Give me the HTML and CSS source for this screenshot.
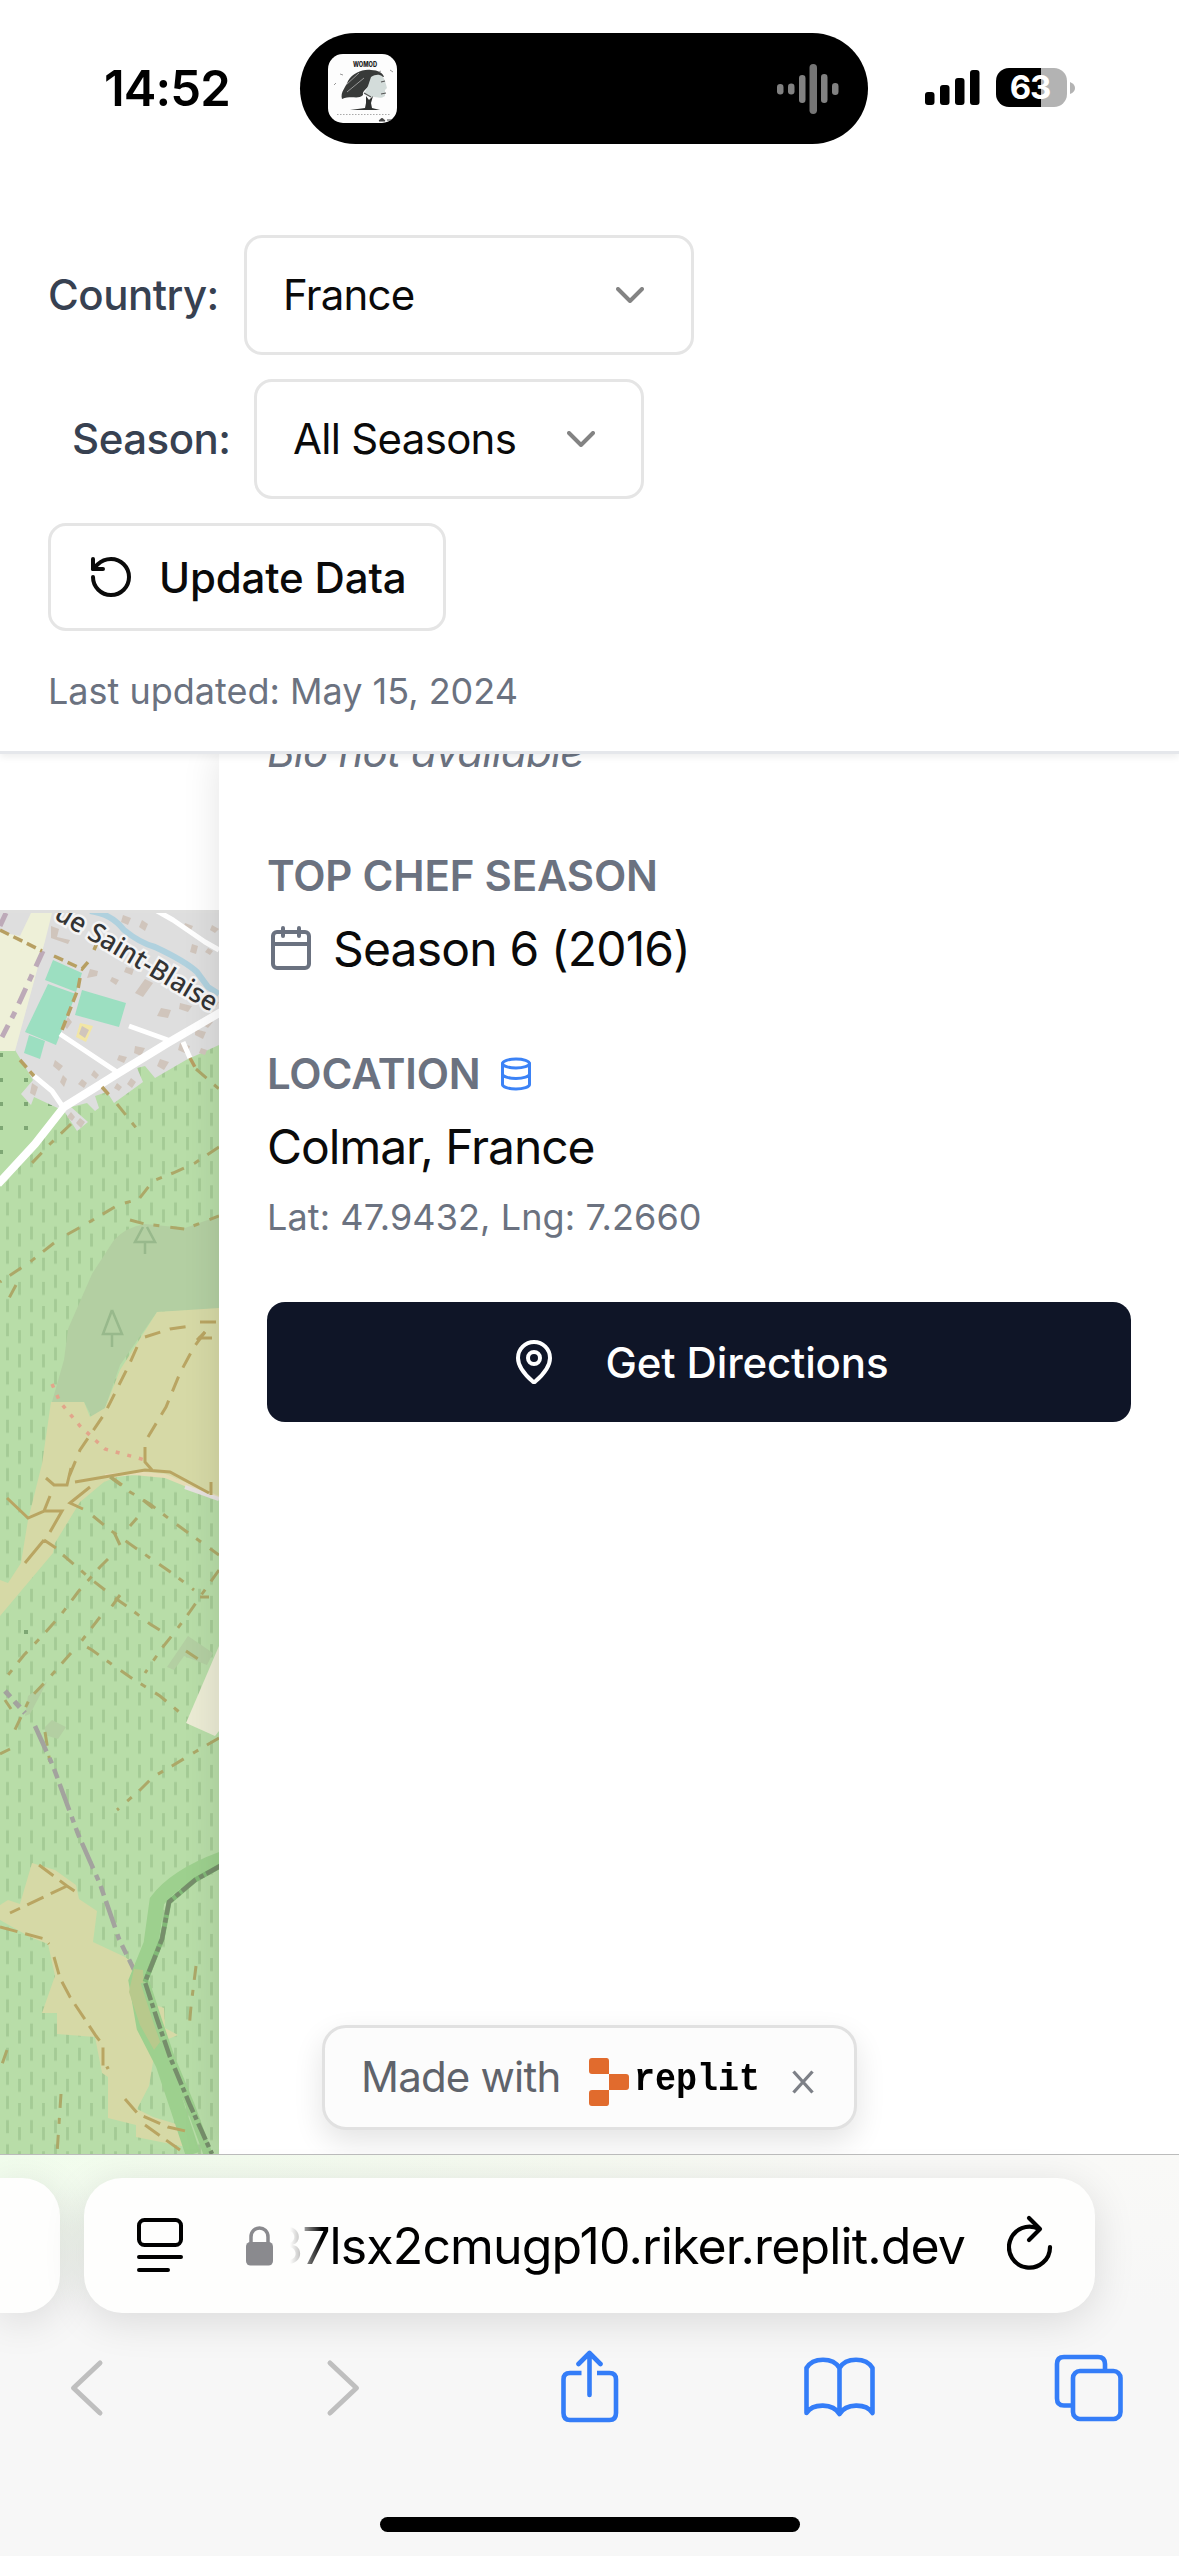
FILE: index.html
```html
<!DOCTYPE html>
<html lang="en">
<head>
<meta charset="utf-8">
<title>Top Chef Map</title>
<link rel="stylesheet" href="styles.css">
</head>
<body>
<div class="screen">
  <div class="status">
    <div class="time">14:52</div>
    <div class="island">
      <svg class="cover" viewBox="0 0 69 69">
        <rect width="69" height="69" rx="15" fill="#fdfdfd"/>
        <text x="25" y="12.5" font-size="7" font-weight="800" textLength="24" lengthAdjust="spacingAndGlyphs" fill="#222">WOMOD</text>
        <path d="M14 45C12 38 18 33 20 27C25 19 34 15 43 16C50 16 55 19 56 23C50 21 44 24 42 30C40 35 34 36 35 41C30 46 24 41 14 45Z" fill="#383a39"/>
        <path d="M43 23C49 19 55 20 57 27L59 34L57 36L57 42C52 46 47 42 43 43L36 40L40 32Z" fill="#d3dcda"/>
        <path d="M53 28L57 27M53 40L58 39M36 39L43 43" stroke="#555" stroke-width="1.2"/>
        <path d="M38 42L41 46L45 42L43 49L44 54L52 56L22 56L37 54L38 49Z" fill="#2e302f"/>
        <path d="M6 31L8 29M12 20L15 21M51 18L53 17M62 16L65 18M18 31L31 19M19 38L36 24" stroke="#999" stroke-width="1"/>
        <path d="M9 60.500H62" stroke="#aaa" stroke-width="1.200" stroke-dasharray="1.500 1.500"/>
        <path d="M51 67Q54 62 57 67ZM59 66H63" stroke="#444" fill="#444"/>
      </svg>
      <svg class="wave" viewBox="0 0 62 52" fill="#818181">
        <rect x="0" y="21" width="6.500" height="10.500" rx="3.200"/><rect x="11" y="20.500" width="6.500" height="11" rx="3.200"/><rect x="22" y="12" width="6.500" height="28" rx="3.200"/><rect x="32.500" y="1" width="7.500" height="50" rx="3.700" fill="#757575"/><rect x="44" y="11" width="6.500" height="29" rx="3.200"/><rect x="55" y="20" width="6.500" height="12" rx="3.200"/>
      </svg>
    </div>
    <div class="indicators">
      <svg class="signal" viewBox="0 0 55 35"><rect y="22" width="9.500" height="13" rx="3"/><rect x="15" y="15" width="9.500" height="20" rx="3"/><rect x="30" y="8" width="9.500" height="27" rx="3"/><rect x="45" width="9.500" height="35" rx="3"/></svg>
      <div class="battery">63</div>
      <svg class="nub" viewBox="0 0 5 12"><path d="M0 0Q5 2 5 6T0 12Z" fill="#b3b3b3"/></svg>
    </div>
  </div>

  <header class="header">
    <div class="field">
      <label class="label country">Country:</label>
      <div class="select wide"><span class="t-france">France</span><svg class="ico chev" viewBox="0 0 24 24"><path d="m6 9 6 6 6-6"/></svg></div>
    </div>
    <div class="field indent">
      <label class="label season">Season:</label>
      <div class="select"><span class="t-seasons">All Seasons</span><svg class="ico chev" viewBox="0 0 24 24"><path d="m6 9 6 6 6-6"/></svg></div>
    </div>
    <button class="update"><svg class="ico" viewBox="0 0 24 24"><path d="M3 12a9 9 0 1 0 9-9 9.750 9.750 0 0 0-6.740 2.740L3 8"/><path d="M3 3v5h5"/></svg><span>Update Data</span></button>
    <div class="updated">Last updated: May 15, 2024</div>
  </header>

  <main class="main">
    <div class="mapcol">
      <svg class="map" viewBox="0 910 219 1244">
        <defs>
          <pattern id="trees" x="0" y="0" width="24" height="24.150" patternUnits="userSpaceOnUse">
            <path d="M7.500 19V24.150M7.500 0V8M19.500 2V15" stroke="#a4ca95" stroke-width="2.800"/>
          </pattern>
        </defs>
        <rect y="910" width="219" height="1244" fill="#b8dda8"/>
        <path d="M0 1190L90 1080L219 1040V2154H0Z" fill="url(#trees)"/>
        <g fill="#7ea774"><path d="M0 1053h3v4H0zM24 1078h4v4h-4zM0 1078h3v4H0zM48 1102h4v4h-4zM24 1102h4v4h-4zM0 1102h3v4H0zM24 1126h4v4h-4zM0 1126h3v4H0zM0 1150h3v4H0zM24 1630h4v4h-4z"/></g>
        <!-- village -->
        <path d="M0 910H219V1045L186 1060L155 1078L145 1066L137 1068L143 1082L114 1103L107 1092L95 1096L99 1108L95 1111L87 1103L71 1107L88 1122L77 1131L64 1111L34 1097L31 1105L21 1094L33 1080L15 1050H0Z" fill="#dedede"/>
        <path d="M0 932L20 936L31 913H52L45 941L15 1051H0Z" fill="#eef0d8"/>
        <g fill="#9cdfc1"><path d="M53 960L82 973L76 992L45 980Z"/><path d="M48 984L76 994L56 1045L25 1032Z"/><path d="M82 990L126 1003L119 1027L75 1015Z"/><path d="M29 1035L45 1041L40 1059L24 1053Z"/></g>
        <path d="M80 1023L93 1026L86 1042L76 1037Z" fill="#f2e6a5"/>
        <g fill="#d0c5bc"><path d="M51 926l8 3-2 8 13 3-2 4-17-6zM123 915l8 3-3 7-7-3zM142 920l6 4-3 7-6-4zM185 923l8 3-3 6-7-3zM192 944l6 2-2 8-6-2zM90 969l8 2-1 5-10 2zM112 977l7 3-3 5-6-4zM145 979l8 4-10 14-8-4zM161 1008l10 2-3 8-11-2zM126 967l8 2-2 6-8-3zM213 1000l6 2-3 5-6-2zM180 1003l12 3-4 6-9-3zM206 1018l7 4-5 6-7-4zM195 1029l11 3-3 7-8-4zM160 1059l9 3-5 8-7-4zM135 1046l10 2-4 8-7-3zM180 1043l10 3-3 8-9-4zM55 1060l8 6-4 5-6-5zM63 1075l4 4-3 8-4-5zM82 1079l5 4-3 5-6-4zM94 1070l5 5-3 4-5-4zM32 1083l6 4-3 9-5-3zM71 1112l4 5-3 4-5-4zM80 1118l5 4-4 6-5-5zM119 1055l8 2-3 6-7-3zM68 1017l4 5-5 7-4-4zM131 1078l5 4-4 6-5-4zM82 1026l7 4-4 8-6-4zM208 948l5 3-3 4-5-3zM117 1083l5 4-3 4-5-3zM201 1048l6 2-2 5-6-2zM212 925l7 4-4 4-5-3z"/></g>
        <path d="M90 911Q112 914 124 930Q140 943 155 947Q185 961 197 972L208 987L219 994" fill="none" stroke="#b0d1de" stroke-width="6"/>
        <g fill="none" stroke="#fff" stroke-linejoin="round">
          <path d="M152 908L173 920L205 942L219 950M60 1034L117 1072M34 1076L52 1091L63 1107M129 1026L168 1040M183 1042L190 1058" stroke-width="5"/>
          <path d="M221 1012L166 1044L117 1074L64 1107L35 1144L-2 1184" stroke-width="8"/>
        </g>
        <g fill="none" stroke="#bdaab8" stroke-width="5" stroke-dasharray="17 9 7 8"><path d="M43 951L31 977L14 1014L2 1037"/><path d="M0 926L6 913"/></g>
        <path d="M0 930L24 942L42 951M54 956L82 969L88 962M80 978L78 989L62 1030M94 950L97 943M20 1060L34 1076M190 1058L196 1069M102 1087L109 1095" fill="none" stroke="#b79f62" stroke-width="3.500" stroke-dasharray="10 5"/>
        <text class="street" x="53" y="918" transform="rotate(30.800 53 918)" textLength="184" lengthAdjust="spacingAndGlyphs">ue Saint-Blaise</text>
        <!-- woods, meadow and clearings -->
        <path d="M219 1216L185 1228L145 1224Q126 1227 114 1240L92 1274L68 1329L64 1360L54 1395L52 1402H84L92 1417L105 1408L120 1365L157 1312L219 1309Z" fill="#b3cfa2"/>
        <g fill="none" stroke="#98b98c" stroke-width="2.500"><path d="M143 1227L135 1242H155L147 1227M145 1242V1254M112 1310L103 1334H122L112 1310M112 1334V1347"/></g>
        <path d="M51 1402H84L90 1417L105 1408L120 1370L157 1312L219 1308V1496L175 1478L130 1472L104 1482L80 1502L55 1543L53 1553L0 1616V1580L8 1583L21 1563L28 1520L42 1464Z" fill="#d6d9a6"/>
        <path d="M167 1667L188 1636L213 1653L207 1665L184 1656L174 1670Z" fill="#b3cfa2"/><path d="M25 1716L28 1696L47 1682L30 1714ZM45 1727L52 1720L66 1727L58 1739L45 1735Z" fill="#b3cfa2"/>
        <path d="M219 1646L186 1723L215 1736L219 1731Z" fill="#ebebd4"/>
        <path d="M52 1384L60 1402L80 1426L105 1449L145 1460" fill="none" stroke="#e2a58b" stroke-width="3.500" stroke-dasharray="4 8"/>
        <path d="M105 1476L134 1473L165 1476L219 1498" fill="none" stroke="#e5dcb5" stroke-width="4"/><path d="M185 1487L219 1499" fill="none" stroke="#e6e1df" stroke-width="4"/>
        <g fill="none" stroke="#b9a562" stroke-width="3">
          <path d="M145 1337L170 1329L190 1326M200 1322H219M137 1347L129 1365L105 1413L80 1450L66 1484M205 1332L194 1347L180 1373L166 1407L148 1437" stroke-dasharray="16 10"/>
          <path d="M75 1482L110 1476L145 1470L170 1472L209 1493M197 1340L205 1332M198 1338H212M145 1447V1462L152 1470M211 1482V1495M46 1478L54 1485H67L71 1468M7 1498L28 1518L44 1511L50 1496M44 1511H62L50 1532M44 1540L25 1563M44 1540L56 1548M90 1487L70 1503L83 1509M111 1477L122 1485"/>
        </g>
        <g fill="none" stroke="#aca868" stroke-width="3" stroke-dasharray="14 10 6 11">
          <path d="M219 1147L195 1163L173 1173L153 1181L139 1199L118 1205L86 1224L61 1238M130 1220L145 1224L185 1229L219 1216M71 1124L50 1144L31 1164M117 1104L141 1134M196 1069L219 1089M54 1243L30 1262L0 1282M16 1285L8 1300"/>
          <path d="M110 1477L130 1492L150 1504L172 1521L194 1537L219 1555M93 1516L110 1530L150 1558L172 1573L194 1590M63 1555L92 1580L105 1590M115 1598L128 1607L150 1624L163 1632"/>
          <path d="M219 1570L202 1594L189 1613L174 1633L162 1648L145 1673M120 1595L107 1613M108 1559L100 1567L78 1592L60 1616L43 1635L24 1655L8 1675M137 1518L130 1526"/>
          <path d="M100 1617L80 1643L92 1650L110 1663L130 1677L160 1696L184 1716M71 1653L50 1677L30 1698L12 1736M186 1651L198 1659M143 1500L153 1508M120 1545L112 1528M200 1597L209 1597"/>
          <path d="M219 1738L195 1752L172 1766L153 1777L140 1790L117 1810M0 1754L10 1749M5 1700L11 1709M45 1732L50 1763M196 1966L191 2006L189 2030M61 2094L57 2154M7 2050L0 2070"/>
        </g>
        <path d="M0 1920V1905L8 1900L20 1904L32 1863L55 1870L76 1885L79 1899L97 1911L93 1942L125 1957L143 1970L142 2000L164 2008L165 2028L178 2035L166 2040L153 2062L149 2086L137 2109L153 2117L186 2127V2147L136 2137V2125L108 2118V2077L102 2073L95 2037L57 2034V2013H42L55 1976L48 1944L30 1937Z" fill="#d6d9a6"/>
        <path d="M35 1726L53 1766L78 1834L100 1884L119 1939L140 1982" fill="none" stroke="#a3a39e" stroke-width="4.500" stroke-dasharray="28 7 6 6 10 6"/>
        <path d="M5 1691L25 1713" stroke="#a3a39e" stroke-width="5" stroke-dasharray="8 6"/>
        <path d="M222 1859Q176 1876 157 1901L151 1944L136 1981L144 2027L163 2064L193 2154" fill="none" stroke="#9dd08e" stroke-width="15"/>
        <path d="M134 1969L129 1992L140 2025L154 2050L163 2038L144 1990L143 1970Z" fill="#b8c98c"/>
        <path d="M145 1982L157 2019L170 2057L190 2105L208 2154" fill="none" stroke="#9dd08e" stroke-width="9"/>
        <path d="M222 1865L195 1880L169 1902L162 1939L145 1982" fill="none" stroke="#80b976" stroke-width="5"/>
        <path d="M222 1865L195 1880L169 1902L162 1939L145 1982L157 2019L170 2057L190 2105L212 2154" fill="none" stroke="#768e6b" stroke-width="4.500" stroke-dasharray="18 3 5 4"/>
        <path d="M39 1865L67 1886L76 1892M67 1886L10 1913M0 1927L45 1939L49 1944M54 1957L60 1978L70 1997L96 2036L103 2045V2070L109 2067M125 2099L138 2114L168 2127L190 2132M145 2125L180 2150" fill="none" stroke="#b9a562" stroke-width="3" stroke-dasharray="18 8"/>
        <rect y="910" width="219" height="3" fill="#dfdfde"/>
      </svg>
    </div>
    <section class="panel">
      <p class="bio"><span>Bio not available</span></p>
      <h3 class="heading h-season">TOP CHEF SEASON</h3>
      <p class="value"><svg class="ico cal" viewBox="0 0 24 24"><path d="M8 2v4M16 2v4M3 10h18"/><rect x="3" y="4" width="18" height="18" rx="2"/></svg><span class="v-season">Season 6 (2016)</span></p>
      <h3 class="heading h-location">LOCATION<svg class="ico db" viewBox="0 0 24 24"><ellipse cx="12" cy="5" rx="9" ry="3"/><path d="M3 5v14a9 3 0 0 0 18 0V5M3 12a9 3 0 0 0 18 0"/></svg></h3>
      <p class="value"><span class="v-city">Colmar, France</span></p>
      <p class="coords">Lat: 47.9432, Lng: 7.2660</p>
      <button class="directions"><svg class="ico" viewBox="0 0 24 24"><path d="M20 10c0 4.993-5.539 10.193-7.399 11.799a1 1 0 0 1-1.202 0C9.539 20.193 4 14.993 4 10a8 8 0 0 1 16 0"/><circle cx="12" cy="10" r="3"/></svg><span>Get Directions</span></button>
    </section>
    <div class="badge">
      <span class="made">Made with</span>
      <svg class="replit-mark" viewBox="0 0 40 48" fill="#e16b2d"><path d="M3 0H17.500Q20 0 20 3V16H3Q0 16 0 13V3Q0 0 3 0ZM20 16H37Q40 16 40 19V29Q40 32 37 32H20ZM3 32H20V45Q20 48 17.500 48H3Q0 48 0 45V35Q0 32 3 32Z"/></svg>
      <span class="replit">replit</span>
      <svg class="close" viewBox="0 0 22 24"><path d="M1.500 1.500L20.500 22.500M20.500 1.500L1.500 22.500" stroke="#7d8087" stroke-width="3.300"/></svg>
    </div>
  </main>

  <footer class="browser">
    <div class="tabs">
      <div class="tab-prev"></div>
      <div class="address">
        <svg class="reader" viewBox="0 0 46 54" fill="none" stroke="#000" stroke-width="4" stroke-linecap="round"><rect x="2" y="2" width="42" height="25" rx="5.500"/><path d="M2 39H44M2 52H31"/></svg>
        <svg class="lock" viewBox="0 0 27 40"><rect y="16" width="27" height="23.500" rx="4.500" fill="#8a8a8e"/><path d="M5 18V11C5 -1 22 -1 22 11V18" fill="none" stroke="#8a8a8e" stroke-width="3.500"/></svg>
        <div class="url"><span>37lsx2cmugp10.riker.replit.dev</span></div>
        <svg class="reload" viewBox="0 0 46 56" fill="none" stroke="#000" stroke-width="4.200" stroke-linecap="round" stroke-linejoin="round"><path d="M43 32A20.500 20.500 0 1 1 32 14"/><path d="M22 3L33 14L22 25"/></svg>
      </div>
    </div>
    <nav class="tools">
      <svg viewBox="0 0 72 76" stroke="#bfbfbf"><path d="M49 13L22.500 38L49 63"/></svg>
      <svg viewBox="0 0 72 76" stroke="#bfbfbf"><path d="M28 13L54.500 38L28 63"/></svg>
      <svg viewBox="0 0 72 76"><path class="butt" d="M29.500 23H18Q11.500 23 11.500 29.500V63Q11.500 70 18 70H57.500Q64 70 64 63V29.500Q64 23 57.500 23H45"/><path d="M37.500 45V3.500M26.500 14L37.500 3L48.500 14"/></svg>
      <svg viewBox="0 0 72 76"><path d="M36.500 18C30 7 10 7 3.500 18V63C10 53 30 53 36.500 64C43 53 63 53 69.500 63V18C63 7 43 7 36.500 18V63"/></svg>
      <svg viewBox="0 0 72 76"><path class="butt" d="M18 55.500H11Q4 55.500 4 48.500V14Q4 7 11 7H45Q52 7 52 14V20"/><rect x="20" y="21" width="47.500" height="48" rx="7"/></svg>
    </nav>
    <div class="home"></div>
  </footer>
</div>
</body>
</html>
```
FILE: styles.css
```css
* { box-sizing: border-box; margin: 0; padding: 0; }
body { background: #fff; font-family: Inter, "Liberation Sans", sans-serif; color: #0a0a0a; }
svg { display: block; flex: none; }
button { font: inherit; color: inherit; background: none; border: 0; }
.screen { width: 1179px; height: 2556px; overflow: hidden; display: flex; flex-direction: column; background: #fff; }

.status { display: grid; grid-template-columns: 300px 568px 311px; height: 187px; padding-top: 33px; flex: none; }
.time { padding-left: 104px; height: 111px; line-height: 111px; font-size: 49px; font-weight: 600; color: #000; letter-spacing: -0.9px; }
.island { height: 111px; border-radius: 56px; background: #000; display: flex; align-items: center; justify-content: space-between; padding: 0 29px 0 28px; }
.cover { width: 69px; height: 69px; }
.wave { width: 62px; height: 52px; }
.indicators { display: flex; align-items: center; height: 109px; padding-left: 57px; }
.signal { width: 55px; height: 35px; }
.battery { width: 71px; height: 39px; margin-left: 16px; border-radius: 13px; background: linear-gradient(90deg, #000 45px, #b3b3b3 45px); color: #fff; font-size: 33px; font-weight: 700; line-height: 39px; text-align: center; letter-spacing: -1px; padding-right: 3px; }
.nub { width: 5px; height: 12px; margin-left: 3px; }

.ico { width: 48px; height: 48px; fill: none; stroke: currentColor; stroke-width: 2; stroke-linecap: round; stroke-linejoin: round; }
.header { height: 567px; flex: none; padding: 48px 48px 36px; border-bottom: 3px solid #e5e7eb; display: flex; flex-direction: column; align-items: flex-start; gap: 24px; background: #fff; box-shadow: 0 3px 7px rgba(0,0,0,.07); clip-path: inset(0 0 -20px 0); position: relative; z-index: 2; font-size: 42px; }
.field { display: flex; align-items: center; }
.indent { margin-left: 24px; }
.label { font-weight: 500; color: #374151; white-space: nowrap; letter-spacing: -.5px; margin-top: -1px; }
.country { width: 196px; }
.season { width: 182px; }
.select { width: 390px; height: 120px; border: 3px solid #e5e5e5; border-radius: 18px; padding: 0 36px; display: flex; align-items: center; justify-content: space-between; white-space: nowrap; }
.wide { width: 450px; padding-right: 37px; }
.t-france { letter-spacing: -.8px; margin-top: -1px; }
.t-seasons { letter-spacing: -.7px; margin-top: -1px; }
.chev { opacity: .5; }
.update { height: 108px; width: 398px; border: 3px solid #e5e5e5; border-radius: 18px; padding: 0 36px; display: flex; align-items: center; gap: 24px; font-weight: 500; white-space: nowrap; letter-spacing: -.15px; }
.updated { font-size: 36px; line-height: 48px; margin-top: 12px; color: #6b7280; }

.main { height: 1400px; flex: none; display: flex; position: relative; }
.mapcol { width: 219px; padding-top: 156px; }
.map { width: 219px; height: 1244px; }
.street { font: 500 27px "Noto Sans", sans-serif; fill: #333; stroke: #f4f4f4; stroke-width: 5px; paint-order: stroke; }
.panel { width: 960px; padding: 0 48px; background: #fff; box-shadow: 0 0 36px rgba(0,0,0,.11); overflow: hidden; clip-path: inset(0 0 0 -60px); position: relative; }
.bio { margin-top: -32px; font-size: 42px; line-height: 60px; font-style: italic; color: #6b7280; letter-spacing: -.8px; }
.heading { font-size: 42px; line-height: 60px; font-weight: 600; color: #6b7280; display: flex; align-items: center; letter-spacing: -.2px; }
.h-season { margin-top: 64px; }
.h-location { margin-top: 60px; }
.value { font-size: 48px; line-height: 72px; margin-top: 6px; display: flex; align-items: center; }
.value span { padding-top: 1px; margin-bottom: -1px; }
.v-season { letter-spacing: -.82px; }
.v-city { letter-spacing: -1.08px; }
.cal { color: #6b7280; margin-right: 18px; }
.db { width: 36px; height: 36px; color: #3b82f6; margin-left: 17px; }
.coords { font-size: 36px; line-height: 48px; margin-top: 11px; color: #6b7280; letter-spacing: .1px; }
.directions { width: 864px; height: 120px; margin-top: 61px; border-radius: 18px; background: #0f1527; color: #fff; font-size: 42px; font-weight: 500; display: flex; align-items: center; justify-content: center; gap: 48px; letter-spacing: -.15px; }
.badge { position: absolute; left: 322px; top: 1271px; width: 535px; height: 105px; border: 3px solid #e1e1e1; border-radius: 24px; background: #fcfcfc; box-shadow: 0 12px 30px rgba(0,0,0,.11); display: flex; align-items: center; padding-left: 36px; white-space: nowrap; }
.made { font-size: 42px; color: #5f636b; width: 228px; letter-spacing: -.8px; margin-top: -2px; }
.replit-mark { width: 40px; height: 48px; margin-top: 8px; }
.replit { font: 700 35px "Liberation Mono", monospace; color: #000; width: 163px; padding-left: 5px; margin-top: 5px; transform: scaleY(1.1); }
.close { width: 22px; height: 24px; margin-top: 9px; }

.browser { height: 402px; flex: none; border-top: 1px solid #bcbcbc; background: linear-gradient(180deg, rgba(247,247,247,0), #f7f7f7 150px), linear-gradient(90deg, #f1fdec, #f6faf1 50%, #f9f9f7 75%); position: relative; z-index: 3; }
.tabs { display: flex; gap: 24px; padding-top: 23px; }
.tab-prev, .address { height: 135px; background: #fefefd; box-shadow: 0 8px 42px rgba(0,0,0,.12); }
.tab-prev { width: 60px; border-radius: 0 38px 38px 0; }
.address { width: 1011px; border-radius: 38px; display: flex; align-items: center; padding-left: 53px; }
.reader { width: 46px; height: 54px; margin-top: -1px; }
.lock { width: 27px; height: 40px; margin-left: 63px; }
.url { width: 675px; height: 70px; margin-left: 17px; overflow: hidden; display: flex; justify-content: flex-end; font-size: 50px; line-height: 70px; white-space: nowrap; color: #000; letter-spacing: -.87px; -webkit-mask-image: linear-gradient(90deg, transparent, rgba(0,0,0,.2) 9px, #000 32px); mask-image: linear-gradient(90deg, transparent, rgba(0,0,0,.2) 9px, #000 32px); }
.reload { width: 46px; height: 56px; margin-left: 42px; margin-top: -5px; }
.tools { display: flex; justify-content: space-between; padding: 37px 54px 0 51px; }
.tools svg { width: 72px; height: 76px; fill: none; stroke: #347df8; stroke-width: 4.600; stroke-linecap: round; stroke-linejoin: round; }
.tools svg[stroke] { stroke: #bfbfbf; stroke-width: 5; }
.tools .butt { stroke-linecap: butt; }
.home { width: 420px; height: 15px; margin: 91px auto 0; border-radius: 8px; background: #000; }
```
